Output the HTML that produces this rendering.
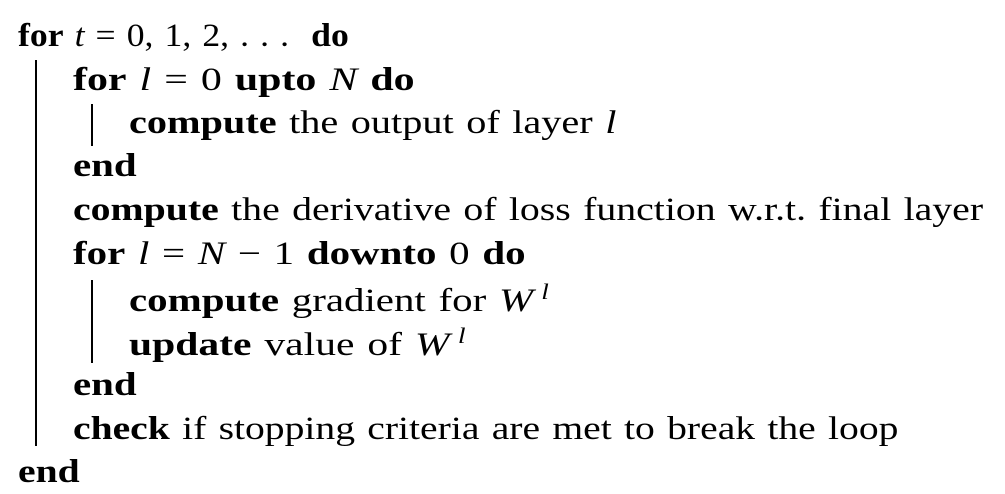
<!DOCTYPE html>
<html><head><meta charset="utf-8"><style>
body{margin:0;background:#fff;width:1005px;height:494px;overflow:hidden;position:relative;font-family:"Liberation Serif",serif;font-size:33px;color:#000}
.l{position:absolute;white-space:nowrap;line-height:1;word-spacing:2px;transform-origin:0 50%}
b{font-weight:bold}
i{font-style:italic}
.bar{position:absolute;width:2px;background:#000}
</style></head><body>
<div class="bar" style="left:35px;top:60px;height:386px"></div>
<div class="bar" style="left:91px;top:104px;height:42px"></div>
<div class="bar" style="left:91px;top:280px;height:83px"></div>
<div class="l" style="left:18px;top:20px;transform:scaleX(1.08)"><b>for</b> <i>t</i> = 0, 1, 2, . . .&nbsp; <b>do</b></div>
<div class="l" style="left:73px;top:64px;transform:scaleX(1.27)"><b>for</b> <i>l</i> = 0 <b>upto</b> <i>N</i> <b>do</b></div>
<div class="l" style="left:129px;top:107px;transform:scaleX(1.22)"><b>compute</b> the output of layer <i>l</i></div>
<div class="l" style="left:73px;top:150px;transform:scaleX(1.24)"><b>end</b></div>
<div class="l" style="left:73px;top:194px;transform:scaleX(1.205)"><b>compute</b> the derivative of loss function w.r.t. final layer</div>
<div class="l" style="left:73px;top:238px;transform:scaleX(1.24)"><b>for</b> <i>l</i> = <i>N</i> − 1 <b>downto</b> 0 <b>do</b></div>
<div class="l" style="left:129px;top:281px;transform:scaleX(1.24)"><b>compute</b> gradient for <i>W</i>&thinsp;<sup style="font-size:22px;font-style:italic">l</sup></div>
<div class="l" style="left:129px;top:325px;transform:scaleX(1.26)"><b>update</b> value of <i>W</i>&thinsp;<sup style="font-size:22px;font-style:italic">l</sup></div>
<div class="l" style="left:73px;top:369px;transform:scaleX(1.24)"><b>end</b></div>
<div class="l" style="left:73px;top:413px;transform:scaleX(1.2)"><b>check</b> if stopping criteria are met to break the loop</div>
<div class="l" style="left:18px;top:456px;transform:scaleX(1.2)"><b>end</b></div>
</body></html>
